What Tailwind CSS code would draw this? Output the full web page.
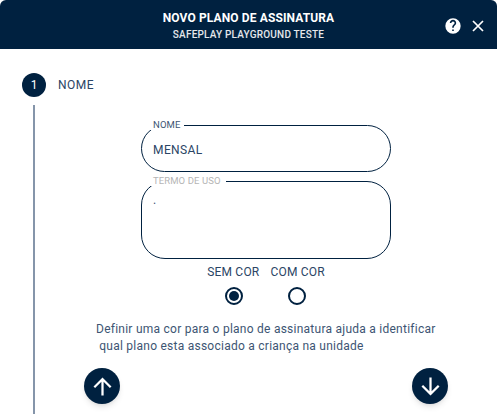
<!DOCTYPE html>
<html lang="pt-BR">
<head>
    <meta charset="UTF-8">
    <title>Novo plano de assinatura</title>
    <script src="https://cdn.jsdelivr.net/npm/@tailwindcss/browser@4"></script>
</head>
<body class="bg-white font-['Roboto',sans-serif] overflow-hidden">
    <div class="h-[414px] w-[497px] flex flex-col overflow-hidden">
        <!-- Header -->
        <header class="relative h-[49px] shrink-0 bg-[#002140] text-white rounded-t-[6px] flex flex-col items-center pt-[11px]">
            <h1 class="text-[12px] leading-[14px] font-bold tracking-[0.12px]">NOVO PLANO DE ASSINATURA</h1>
            <p class="text-[10px] leading-[14px] font-medium tracking-[0.2px] text-white/90 mt-[3px]">SAFEPLAY PLAYGROUND TESTE</p>
            <div class="absolute right-[13px] top-[18px] flex items-center gap-[11px]">
                <svg class="w-[16px] h-[16px]" viewBox="0 0 24 24" fill="#fff"><path d="M12 0.5a11.500 11.500 0 1 0 0 23 11.500 11.500 0 0 0 0-23zm1.200 19h-2.400v-2.400h2.400v2.400zm2.500-9.200-1.100 1.100c-.9.9-1.400 1.600-1.400 3.400h-2.400V14c0-1.300.5-2.500 1.400-3.400l1.500-1.500c.4-.4.7-1 .7-1.600 0-1.300-1.100-2.400-2.400-2.400S9.600 6.200 9.600 7.500H7.200c0-2.700 2.100-4.800 4.800-4.800s4.800 2.100 4.800 4.800c0 1.100-.4 2-1.100 2.800z"/></svg>
                <svg class="w-[12px] h-[12px]" viewBox="0 0 12 12" fill="none" stroke="#fff" stroke-width="1.700"><path d="M1 1l10 10M11 1L1 11"/></svg>
            </div>
        </header>

        <!-- Step -->
        <main class="flex-1 flex pl-[22px] pt-[24px] min-h-0">
            <div class="w-[24px] flex flex-col items-center shrink-0">
                <div class="w-[24px] h-[24px] rounded-full bg-[#002140] text-white text-[12px] flex items-center justify-center shrink-0">1</div>
                <div class="w-[2px] flex-1 mt-[8px] bg-[#8595aa]"></div>
            </div>
            <div class="flex-1 min-w-0 text-[#0b2a4a]">
                <div class="pl-[12px] h-[24px] flex items-center text-[12px] tracking-[0.5px] text-[#2b4565]">NOME</div>

                <div class="ml-[95px] w-[250px] mt-[28px]">
                    <fieldset class="h-[52px] -mt-[5px] border border-[#002140] rounded-[24px] pl-[8px] pr-[10px]">
                        <legend class="pl-[3px] pr-[4px] text-[9.5px] leading-[10px] tracking-[0.1px] text-[#3d5573]">NOME</legend>
                        <div class="pl-[3px] pt-[12px] text-[12px] leading-[16px] tracking-[0.4px] text-[#2b4565]">MENSAL</div>
                    </fieldset>
                    <fieldset class="h-[83px] mt-[4px] border border-[#002140] rounded-[24px] pl-[8px] pr-[10px]">
                        <legend class="pl-[3px] pr-[5px] text-[9.5px] leading-[10px] tracking-[0.1px] text-[#b5b5b5]">TERMO DE USO</legend>
                        <div class="pl-[3px] pt-[7px] text-[12px] leading-[14px] text-[#3d5573]">.</div>
                    </fieldset>
                </div>

                <!-- Cor -->
                <div class="ml-[95px] w-[250px] flex justify-center gap-[11px] mt-[6px] text-[12px] leading-[14px] tracking-[0.2px] text-[#2b4565]">
                    <span>SEM COR</span>
                    <span>COM COR</span>
                </div>
                <div class="ml-[95px] w-[250px] flex justify-center gap-[45px] mt-[8px] pr-[2px]">
                    <div class="w-[18px] h-[18px] rounded-full border-2 border-[#002140] flex items-center justify-center">
                        <div class="w-[10px] h-[10px] rounded-full bg-[#002140]"></div>
                    </div>
                    <div class="w-[18px] h-[18px] rounded-full border-2 border-[#002140]"></div>
                </div>

                <p class="ml-[50px] mt-[16px] text-[12px] leading-[17px] tracking-[0.25px] text-[#3d5573] whitespace-pre">Definir uma cor para o plano de assinatura ajuda a identificar
 qual plano esta associado a criança na unidade</p>

                <div class="ml-[38px] w-[364px] flex justify-between mt-[13px]">
                    <button class="w-[36px] h-[36px] rounded-full bg-[#002140] shadow-md flex items-center justify-center">
                        <svg class="w-[27px] h-[27px]" viewBox="0 0 24 24" fill="#fff"><path d="M4 12l1.410 1.410L11 7.830V20h2V7.830l5.580 5.590L20 12l-8-8-8 8z"/></svg>
                    </button>
                    <button class="w-[36px] h-[36px] rounded-full bg-[#002140] shadow-md flex items-center justify-center">
                        <svg class="w-[27px] h-[27px]" viewBox="0 0 24 24" fill="#fff"><path d="M20 12l-1.410-1.410L13 16.170V4h-2v12.170l-5.580-5.590L4 12l8 8 8-8z"/></svg>
                    </button>
                </div>
            </div>
        </main>
    </div>
</body>
</html>
